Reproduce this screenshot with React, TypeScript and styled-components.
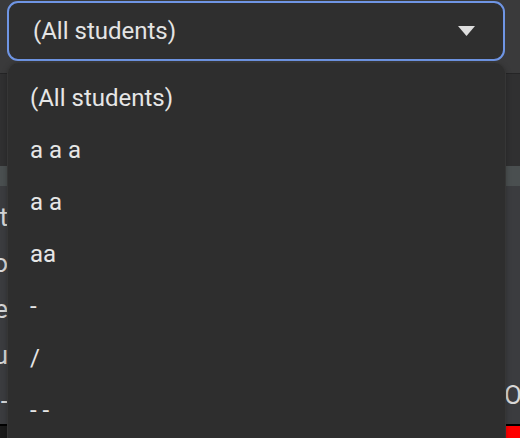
import React from "react";
import styled, { createGlobalStyle } from "styled-components";

const Global = createGlobalStyle`
  html, body { margin: 0; padding: 0; background: #3b3c3f; }
  body { font-family: Roboto, "Noto Sans", sans-serif; }
`;

const Page = styled.div`
  position: relative;
  width: 520px;
  height: 438px;
  overflow: hidden;
  display: flex;
  flex-direction: column;
  background: #3b3c3f;
`;

const TopBand = styled.div`
  height: 73px;
  background: #3a3a3b;
  border-bottom: 1px solid #252526;
  flex: none;
`;

const DarkBand = styled.div`
  height: 92px;
  background: #303031;
  flex: none;
`;

const Bar = styled.div`
  height: 20px;
  background: #4a4f50;
  flex: none;
`;

const Body = styled.div`
  flex: 1;
  display: flex;
  justify-content: space-between;
`;

const EdgeColumn = styled.div<{ $align: "left" | "right" }>`
  width: ${(p) => (p.$align === "left" ? 8 : 16)}px;
  overflow: hidden;
  display: flex;
  flex-direction: column;
  align-items: ${(p) => (p.$align === "left" ? "flex-end" : "flex-start")};
  color: #d8d8d8;
  font-size: 26px;
  line-height: 46px;
  white-space: nowrap;
`;

const EdgeText = styled.div<{ $mt?: number }>`
  margin-top: ${(p) => p.$mt ?? 0}px;
`;

const BottomBlock = styled.div<{ $color: string }>`
  margin-top: auto;
  align-self: stretch;
  height: 20px;
  border-top: 2px solid #000;
  background: ${(p) => p.$color};
  flex: none;
`;

const Select = styled.div`
  position: absolute;
  top: 1px;
  left: 7px;
  width: 498px;
  height: 60px;
  box-sizing: border-box;
  border: 2px solid #6f95e4;
  border-radius: 11px;
  background: #2f2f2f;
  display: flex;
  align-items: center;
  justify-content: space-between;
  padding: 0 28px 0 24px;
  color: #e4e4e4;
  font-size: 24px;
`;

const Caret = styled.svg`
  width: 17px;
  height: 10px;
  display: block;
`;

const Menu = styled.div`
  position: absolute;
  top: 63px;
  left: 8px;
  width: 497px;
  height: 400px;
  box-sizing: border-box;
  background: #2e2e2e;
  border-radius: 11px;
  box-shadow: 0 0 0 1px #363636, 0 2px 6px rgba(0, 0, 0, 0.35);
  padding: 9px 0;
  display: flex;
  flex-direction: column;
`;

const Item = styled.div`
  height: 52px;
  display: flex;
  align-items: center;
  padding-left: 22px;
  color: #e6e6e6;
  font-size: 24px;
  flex: none;
`;

const items = ["(All students)", "a a a", "a a", "aa", "-", "/", "- -"];

export default function App() {
  return (
    <>
      <Global />
      <Page>
        <TopBand />
        <DarkBand />
        <Bar />
        <Body>
          <EdgeColumn $align="left">
            <EdgeText $mt={8}>t</EdgeText>
            <EdgeText>o</EdgeText>
            <EdgeText>e</EdgeText>
            <EdgeText>u</EdgeText>
            <EdgeText>-</EdgeText>
            <BottomBlock $color="#1a1a1a" />
          </EdgeColumn>
          <EdgeColumn $align="right">
            <EdgeText $mt={186}>O</EdgeText>
            <BottomBlock $color="#ff0000" />
          </EdgeColumn>
        </Body>
        <Select>
          <span>(All students)</span>
          <Caret viewBox="0 0 17 10">
            <path d="M0 0 H17 L8.5 10 Z" fill="#dedede" />
          </Caret>
        </Select>
        <Menu>
          {items.map((t) => (
            <Item key={t}>{t}</Item>
          ))}
        </Menu>
      </Page>
    </>
  );
}
